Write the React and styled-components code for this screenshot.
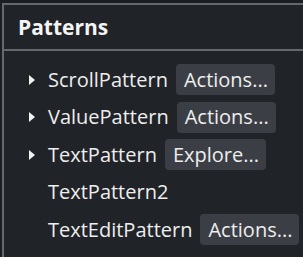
import React from 'react';
import styled, { createGlobalStyle } from 'styled-components';

const GlobalStyle = createGlobalStyle`
  html, body {
    margin: 0;
    padding: 0;
    background-color: #1c1e21;
    overflow: hidden;
  }
`;

const patterns = [
  { name: 'ScrollPattern', expandable: true, action: 'Actions...' },
  { name: 'ValuePattern', expandable: true, action: 'Actions...' },
  { name: 'TextPattern', expandable: true, action: 'Explore...' },
  { name: 'TextPattern2', expandable: false },
  { name: 'TextEditPattern', expandable: false, action: 'Actions...' },
];

const App = () => {
  return (
    <>
      <GlobalStyle />
      <Frame>
        <Panel>
          <Header>
            <Title>Patterns</Title>
          </Header>
          <PatternList>
            {patterns.map(pattern => (
              <PatternRow key={pattern.name}>
                <ExpandSlot>{pattern.expandable && <Caret />}</ExpandSlot>
                <PatternName>{pattern.name}</PatternName>
                {pattern.action && <ActionButton>{pattern.action}</ActionButton>}
              </PatternRow>
            ))}
          </PatternList>
        </Panel>
      </Frame>
    </>
  );
};

export default App;

const Frame = styled.div`
  width: 303px;
  height: 257px;
  padding: 3px 0 0 2px;
  box-sizing: border-box;
  background-color: #1c1e21;
`;

const Panel = styled.div`
  height: 100%;
  border-top: 2px solid #65686c;
  border-left: 2px solid #65686c;
  background-color: #202327;
  font-family: "Open Sans", "Noto Sans", sans-serif;
  color: #eeeeee;
`;

const Header = styled.div`
  height: 44px;
  display: flex;
  align-items: center;
  padding-left: 14px;
  border-bottom: 2px solid #65686c;
`;

const Title = styled.h2`
  margin: 0;
  font-size: 21px;
  font-weight: 700;
  color: #f4f4f4;
  line-height: 1;
`;

const PatternList = styled.ul`
  list-style: none;
  margin: 0;
  padding: 10px 0 0 25px;
`;

const PatternRow = styled.li`
  height: 37.5px;
  display: flex;
  align-items: center;
`;

const ExpandSlot = styled.span`
  width: 19px;
  display: flex;
  align-items: center;
`;

const Caret = styled.span`
  width: 0;
  height: 0;
  border-top: 5px solid transparent;
  border-bottom: 5px solid transparent;
  border-left: 6px solid #f2f2f2;
`;

const PatternName = styled.span`
  font-size: 20px;
  line-height: 1;
  margin-right: 8px;
`;

const ActionButton = styled.button`
  height: 31px;
  padding: 0 7px 0 8px;
  border: none;
  border-radius: 4px;
  background-color: #3b3f45;
  color: #eeeeee;
  font-family: inherit;
  font-size: 20px;
  line-height: 1;
  cursor: pointer;
`;
